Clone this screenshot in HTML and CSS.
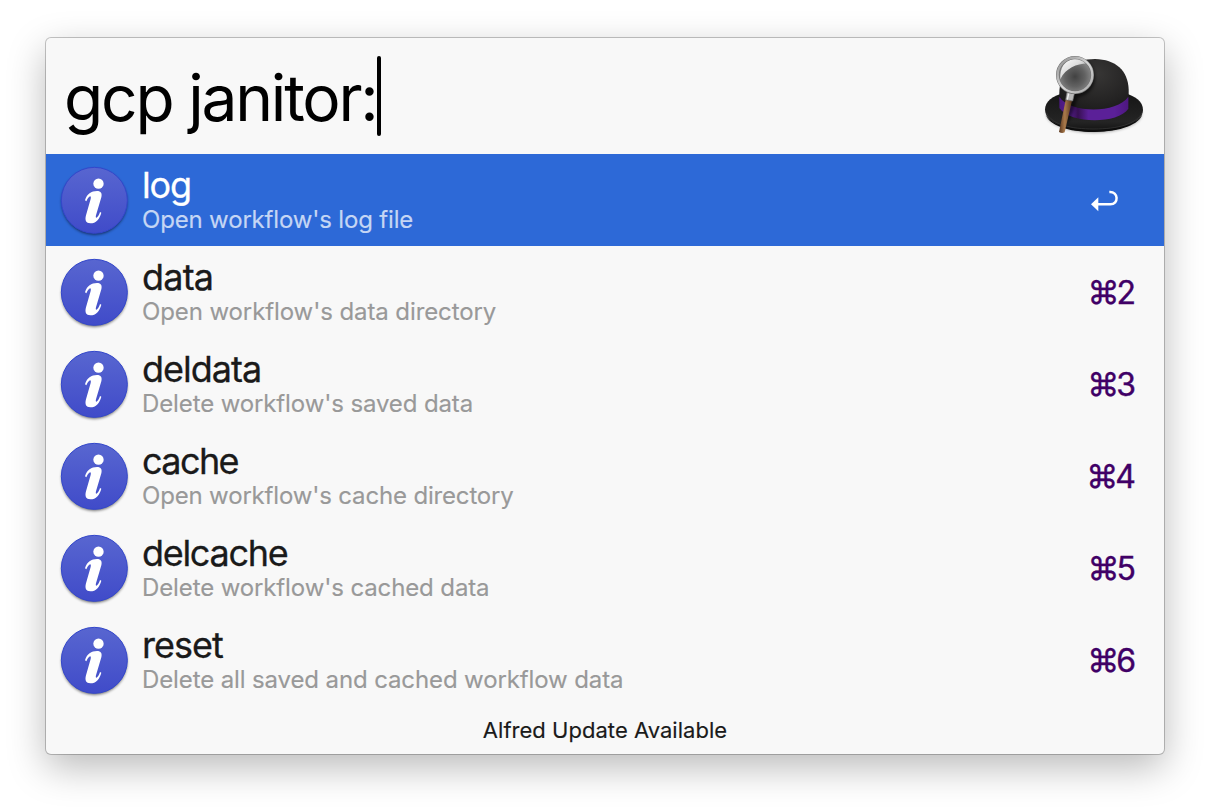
FILE: index.html
```html
<!DOCTYPE html>
<html lang="en">
<head>
<meta charset="utf-8">
<title>Alfred</title>
<link rel="stylesheet" href="styles.css">
</head>
<body>
<svg width="0" height="0" class="defs" aria-hidden="true">
  <defs>
    <linearGradient id="disc" x1="0" y1="0" x2="0" y2="1"><stop offset="0" stop-color="#5866d0"/><stop offset="1" stop-color="#404bc9"/></linearGradient>
    <filter id="soft" x="-20%" y="-20%" width="140%" height="140%"><feGaussianBlur stdDeviation="4"/></filter>
    <symbol id="info" viewBox="0 0 270 255">
      <circle cx="133" cy="126" r="98" fill="#000" opacity=".6" filter="url(#soft)"/>
      <circle cx="133" cy="121" r="99" fill="url(#disc)" stroke="#3347cc" stroke-width="3"/>
      <circle cx="145.500" cy="71" r="15.500" fill="#fff"/>
      <path d="M105 121C111 101 124 93 141 93C153 93 157 100 154 112L138 166C136 174 139 175 142 171C146 167 148 162 150 156L154 158C149 177 138 190 121 190C108 190 104 181 108 166L122 117C124 109 121 107 117 111C113 115 111 119 109 124Z" fill="#fff"/>
    </symbol>
  </defs>
</svg>
<main class="panel">
  <header class="search">
    <span class="query">gcp janitor:</span><span class="caret"></span>
    <svg class="hat" viewBox="0 0 390 330" role="img" aria-label="Alfred">
      <defs>
        <linearGradient id="brim" x1="0" y1="0" x2="0" y2="1"><stop offset="0" stop-color="#151515"/><stop offset=".75" stop-color="#242424"/><stop offset="1" stop-color="#111"/></linearGradient>
        <radialGradient id="crown" cx=".55" cy=".25" r=".8"><stop offset="0" stop-color="#373635"/><stop offset=".6" stop-color="#242323"/><stop offset="1" stop-color="#151515"/></radialGradient>
        <linearGradient id="band"><stop offset="0" stop-color="#4a187e"/><stop offset=".15" stop-color="#592093"/><stop offset=".27" stop-color="#371052"/><stop offset=".42" stop-color="#5b2098"/><stop offset=".8" stop-color="#5b2098"/><stop offset="1" stop-color="#4d1780"/></linearGradient>
        <radialGradient id="glass" cx=".5" cy=".55"><stop offset="0" stop-color="#424242"/><stop offset=".6" stop-color="#626262"/><stop offset="1" stop-color="#858585"/></radialGradient>
        <linearGradient id="shine" x1="0" y1="0" x2="1" y2="1"><stop offset="0" stop-color="#fff"/><stop offset=".45" stop-color="#ddd"/><stop offset="1" stop-color="#666"/></linearGradient>
        <linearGradient id="ring" x1="0" y1="0" x2="1" y2="1"><stop offset="0" stop-color="#8e8e8e"/><stop offset=".5" stop-color="#d6d6d6"/><stop offset="1" stop-color="#aaa"/></linearGradient>
        <linearGradient id="wood"><stop offset="0" stop-color="#5b3820"/><stop offset=".45" stop-color="#aa7a4b"/><stop offset="1" stop-color="#54341d"/></linearGradient>
      </defs>
      <ellipse cx="192" cy="221" rx="143" ry="57" fill="#000" opacity=".35" filter="url(#soft)"/>
      <path d="M45 209C45 184 67 167 105 158H280C318 168 339 185 339 210C338 246 275 275 193 275C108 275 47 249 45 209Z" fill="url(#brim)"/>
      <path d="M48 224C64 256 123 269 192 269C263 269 322 253 337 223C330 252 272 276 193 276C114 276 56 255 48 224Z" fill="#0d0d0d"/>
      <path d="M50 219C66 254 123 267 192 267C263 267 320 252 336 218" fill="none" stroke="#383838" stroke-width="2"/>
      <path d="M88 202V160C88 96 129 57 195 57C257 58 294 92 296 148V202C266 248 119 248 88 202Z" fill="url(#crown)"/>
      <path d="M88 170C118 220 260 222 295 170V206C263 253 120 252 88 204Z" fill="url(#band)"/>
      <path d="M173 64C197 87 202 121 187 144C174 164 153 170 144 172L120 238L103 256L124 160Z" fill="#050505" opacity=".55" filter="url(#soft)"/>
      <path d="M107 180L126 182L104 277Q96 281 87 276Z" fill="url(#wood)"/>
      <path d="M111 157L133 161L128 183L107 179Z" fill="#b8b8b8" stroke="#777" stroke-width="2"/>
      <path d="M116 161L112 179" stroke="#eee" stroke-width="4"/>
      <circle cx="135" cy="105" r="50" fill="url(#glass)"/>
      <path d="M91 118C88 83 105 59 134 56C152 56 163 60 172 70C140 72 107 84 91 118Z" fill="url(#shine)"/>
      <circle cx="135" cy="105" r="52" fill="none" stroke="#747474" stroke-width="10"/>
      <circle cx="135" cy="105" r="52" fill="none" stroke="url(#ring)" stroke-width="7"/>
    </svg>
  </header>
  <ul class="results">
    <li class="row selected"><svg class="icon"><use href="#info"/></svg><div class="label"><div class="title t1">log</div><div class="sub s1">Open workflow's log file</div></div><svg class="return" viewBox="0 0 84 66"><path d="M55 6C83 4 84 43 58 43H20" fill="none" stroke="#fff" stroke-width="7.500"/><path d="M0 43L22 22V64Z" fill="#fff"/></svg></li>
    <li class="row"><svg class="icon"><use href="#info"/></svg><div class="label"><div class="title t2">data</div><div class="sub s2">Open workflow's data directory</div></div><kbd class="key"><span class="cmd">⌘</span>2</kbd></li>
    <li class="row"><svg class="icon"><use href="#info"/></svg><div class="label"><div class="title t3">deldata</div><div class="sub s3">Delete workflow's saved data</div></div><kbd class="key"><span class="cmd">⌘</span>3</kbd></li>
    <li class="row"><svg class="icon"><use href="#info"/></svg><div class="label"><div class="title t4">cache</div><div class="sub s4">Open workflow's cache directory</div></div><kbd class="key"><span class="cmd">⌘</span>4</kbd></li>
    <li class="row"><svg class="icon"><use href="#info"/></svg><div class="label"><div class="title t5">delcache</div><div class="sub s5">Delete workflow's cached data</div></div><kbd class="key"><span class="cmd">⌘</span>5</kbd></li>
    <li class="row"><svg class="icon"><use href="#info"/></svg><div class="label"><div class="title t6">reset</div><div class="sub s6">Delete all saved and cached workflow data</div></div><kbd class="key"><span class="cmd">⌘</span>6</kbd></li>
  </ul>
  <footer class="footer">Alfred Update Available</footer>
</main>
</body>
</html>
```

FILE: styles.css
```css
* { box-sizing: border-box; }
body { margin: 0; height: 808px; overflow: hidden; padding: 38px 46px; background: #fff; font-family: Inter, "Liberation Sans", sans-serif; color: #1a1a1a; }
.defs { position: absolute; }
.panel { width: 1118px; height: 716px; background: #f8f8f8; border-radius: 5px; box-shadow: 0 0 0 1px rgba(0,0,0,.22), 0 13px 38px rgba(0,0,0,.28); }
.search { height: 116px; display: flex; align-items: flex-start; padding: 2px 4px 0 18px; color: #000; }
.query { font-size: 64px; line-height: 80px; padding-top: 18px; letter-spacing: -2.2px; white-space: nowrap; }
.caret { width: 4px; height: 80px; margin-top: 16px; border-radius: 2px; background: #000; }
.hat { width: 130px; height: 110px; margin-left: auto; }
.results { list-style: none; margin: 0; padding: 0; }
.row { height: 92px; display: flex; align-items: flex-start; padding: 0 28px 0 4px; }
.icon { width: 90px; height: 85px; margin-top: 6px; flex: none; }
.label { flex: 1; padding: 9px 0 0 2px; white-space: nowrap; }
.title { font-size: 36px; line-height: 44px; letter-spacing: -1px; -webkit-text-stroke: .3px currentColor; }
.sub { font-size: 24px; line-height: 24px; padding-top: 1px; letter-spacing: -.12px; color: #999; -webkit-text-stroke: .15px currentColor; }
.t1 { letter-spacing: -1.2px; }
.t2 { letter-spacing: -.8px; }
.t4 { letter-spacing: -1.6px; }
.t5 { letter-spacing: -1.3px; }
.s1 { letter-spacing: -.17px; }
.s2 { letter-spacing: -.1px; }
.s4 { letter-spacing: -.17px; }
.key { font: 400 32px/40px Inter, sans-serif; color: #400066; margin-top: 27px; display: flex; -webkit-text-stroke: .4px currentColor; }
.cmd { letter-spacing: -3px; }
.selected { background: #2d69d7; }
.selected .title { color: #fff; }
.selected .sub { color: #c5d6f4; }
.return { width: 28px; height: 22px; margin: 36px 17px 0 0; }
.footer { height: 48px; text-align: center; font-size: 22px; line-height: 48px; letter-spacing: .03px; -webkit-text-stroke: .15px currentColor; }
```
